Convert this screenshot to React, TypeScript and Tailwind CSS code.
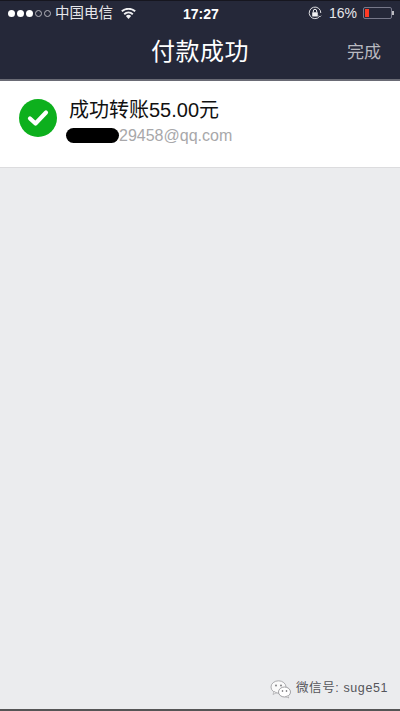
const F = '"Liberation Sans","Noto Sans CJK SC",sans-serif';

function Wifi() {
  return (
    <svg width="15" height="11" viewBox="0 0 15 11" className="block">
      <path d="M7.5 11L4.9 8a3.8 3.8 0 0 1 5.2 0z" fill="#f0f0f2" />
      <path d="M3.2 6.2a6.5 6.5 0 0 1 8.6 0" stroke="#f0f0f2" strokeWidth="1.9" fill="none" />
      <path d="M0.8 3.3a10.2 10.2 0 0 1 13.4 0" stroke="#f0f0f2" strokeWidth="1.9" fill="none" />
    </svg>
  );
}

function Lock() {
  return (
    <svg width="14" height="14" viewBox="0 0 14 14" className="block">
      <path d="M11.6 10.4A5.8 5.8 0 1 1 12.8 7" stroke="#dcdce0" strokeWidth="1" fill="none" />
      <path d="M10.6 9.6l1.2 1.4 1.4-1.4" stroke="#dcdce0" strokeWidth="0.8" fill="none" />
      <rect x="4.2" y="6.2" width="5.6" height="4.2" rx="0.5" fill="#f0f0f2" />
      <path d="M5.3 6.2V5a1.7 1.7 0 0 1 3.4 0v1.2" stroke="#f0f0f2" strokeWidth="1" fill="none" />
    </svg>
  );
}

function WeChat() {
  return (
    <svg width="22" height="20" viewBox="0 0 22 20" className="block">
      <ellipse cx="8.5" cy="8" rx="7.5" ry="6.2" fill="#fafafa" stroke="#9a9a9e" strokeWidth="0.8" />
      <path d="M4 12.5l-1 3 3.4-1.8z" fill="#fafafa" stroke="#9a9a9e" strokeWidth="0.6" />
      <ellipse cx="14.5" cy="13" rx="6" ry="5" fill="#ffffff" stroke="#8a8a8e" strokeWidth="0.8" />
      <path d="M17.5 16.8l1.4 2.2-3.2-1.3z" fill="#ffffff" stroke="#8a8a8e" strokeWidth="0.5" />
      <circle cx="6" cy="6.5" r="0.9" fill="#77777b" />
      <circle cx="11" cy="6.5" r="0.9" fill="#77777b" />
      <circle cx="12.5" cy="12" r="0.8" fill="#55555a" />
      <circle cx="16.5" cy="12" r="0.8" fill="#55555a" />
    </svg>
  );
}

export default function App() {
  return (
    <div className="flex h-[711px] w-[400px] flex-col overflow-hidden bg-[#ebecee]" style={{ fontFamily: F }}>
      <header className="flex h-[81px] flex-col border-t border-b-2 border-t-[#16161f] border-b-[#6a6b75] bg-[#252839]">
        <div className="relative flex h-[24px] items-center justify-between pl-[8px] pr-[8px] text-[#e6e6ea]">
          <div className="flex items-center">
            <div className="flex gap-[2px]">
              {[1, 1, 1, 0, 0].map((on, i) => (
                <span
                  key={i}
                  className={on ? "h-[7px] w-[7px] rounded-full bg-white" : "h-[7px] w-[7px] rounded-full border border-[#b5b5bc]"}
                />
              ))}
            </div>
            <span className="ml-[4px] text-[14.5px] leading-none">中国电信</span>
            <span className="ml-[8px]"><Wifi /></span>
          </div>
          <span className="absolute left-[183px] top-[5px] text-[14px] font-bold leading-[16px] text-white">17:27</span>
          <div className="flex items-center">
            <Lock />
            <span className="ml-[7px] text-[14px] leading-none">16%</span>
            <div className="relative ml-[6px] flex h-[12px] w-[29px] rounded-[2px] border border-[#77788a] p-[1px]">
              <div className="h-full w-[4px] bg-[#ff3a24]" />
              <span className="absolute -right-[3px] top-[3px] h-[4px] w-[2px] bg-[#bdbdc2]" />
            </div>
          </div>
        </div>
        <div className="relative flex flex-1 items-center justify-center">
          <span className="text-[24px] leading-none tracking-[0.5px] text-white">付款成功</span>
          <span className="absolute right-[19px] top-[19px] text-[17px] leading-none text-[#b8b9c0]">完成</span>
        </div>
      </header>

      <section className="flex h-[87px] items-start border-b border-[#dcdcde] bg-white pl-[19px] pt-[18px]">
        <div className="flex h-[38px] w-[38px] items-center justify-center rounded-full bg-[#0db01d]">
          <svg width="24" height="20" viewBox="0 0 24 20">
            <path d="M4 10.5l5.5 5L20 4.5" stroke="#fff" strokeWidth="4.2" fill="none" strokeLinecap="round" strokeLinejoin="round" />
          </svg>
        </div>
        <div className="ml-[12px] flex flex-col">
          <div className="text-[20px] leading-[22px] text-[#111]">成功转账55.00元</div>
          <div className="relative mt-[6px] pl-[50px] text-[16px] leading-[18px] text-[#a8a8aa]">
            <span className="absolute -left-[3px] top-[1px] h-[15px] w-[53px] rounded-full bg-black" />
            <span>29458@qq.com</span>
          </div>
        </div>
      </section>

      <footer className="mt-auto flex h-[41px] items-center border-b-2 border-[#555] pb-[2px] pl-[270px]">
        <WeChat />
        <span className="ml-[4px] text-[12.5px] leading-none tracking-[0.6px] text-[#55555a]">微信号: suge51</span>
      </footer>
    </div>
  );
}
